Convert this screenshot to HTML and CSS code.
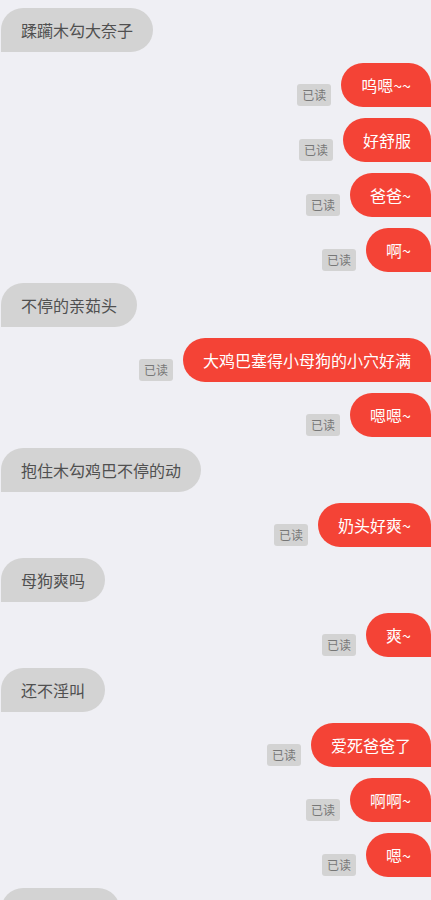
FILE: index.html
```html
<html>
	<head>
		<meta charset="utf-8">
		<title>聊天</title>
		<link rel="stylesheet" href="styles.css">
	</head>
	<body>
		<div class="chat">
			<div class="row left"><div class="bubble">蹂躏木勾大奈子</div></div>
			<div class="row right"><span class="read">已读</span><div class="bubble">呜嗯~~</div></div>
			<div class="row right"><span class="read">已读</span><div class="bubble">好舒服</div></div>
			<div class="row right"><span class="read">已读</span><div class="bubble">爸爸~</div></div>
			<div class="row right"><span class="read">已读</span><div class="bubble">啊~</div></div>
			<div class="row left"><div class="bubble">不停的亲茹头</div></div>
			<div class="row right"><span class="read">已读</span><div class="bubble">大鸡巴塞得小母狗的小穴好满</div></div>
			<div class="row right"><span class="read">已读</span><div class="bubble">嗯嗯~</div></div>
			<div class="row left"><div class="bubble">抱住木勾鸡巴不停的动</div></div>
			<div class="row right"><span class="read">已读</span><div class="bubble">奶头好爽~</div></div>
			<div class="row left"><div class="bubble">母狗爽吗</div></div>
			<div class="row right"><span class="read">已读</span><div class="bubble">爽~</div></div>
			<div class="row left"><div class="bubble">还不淫叫</div></div>
			<div class="row right"><span class="read">已读</span><div class="bubble">爱死爸爸了</div></div>
			<div class="row right"><span class="read">已读</span><div class="bubble">啊啊~</div></div>
			<div class="row right"><span class="read">已读</span><div class="bubble">嗯~</div></div>
			<div class="row left"><div class="bubble blank"></div></div>
		</div>
	</body>
</html>
```

FILE: styles.css
```css
html{
	font-family: "Microsoft YaHei", "Noto Sans CJK SC", sans-serif;
}
body{
	margin: 0;
	background-color: #efeff4;
}
.chat{
	padding: 8px 0 0 1px;
}
.row{
	display: flex;
	align-items: flex-end;
	margin-bottom: 11px;
}
.row.right{
	justify-content: flex-end;
}
.bubble{
	height: 44px;
	line-height: 44px;
	padding: 0 20px;
	font-size: 16px;
	white-space: nowrap;
}
.bubble.blank{
	width: 79px;
}
.left .bubble{
	background-color: #d3d3d3;
	color: #505050;
	border-radius: 22px 22px 22px 0;
}
.right .bubble{
	background-color: #f44336;
	color: white;
	border-radius: 22px 22px 0 22px;
}
.read{
	height: 22px;
	line-height: 22px;
	padding: 0 5px;
	margin: 0 10px 1px 0;
	font-size: 12px;
	color: #777;
	background-color: #d3d3d3;
	border-radius: 3px;
}
```
